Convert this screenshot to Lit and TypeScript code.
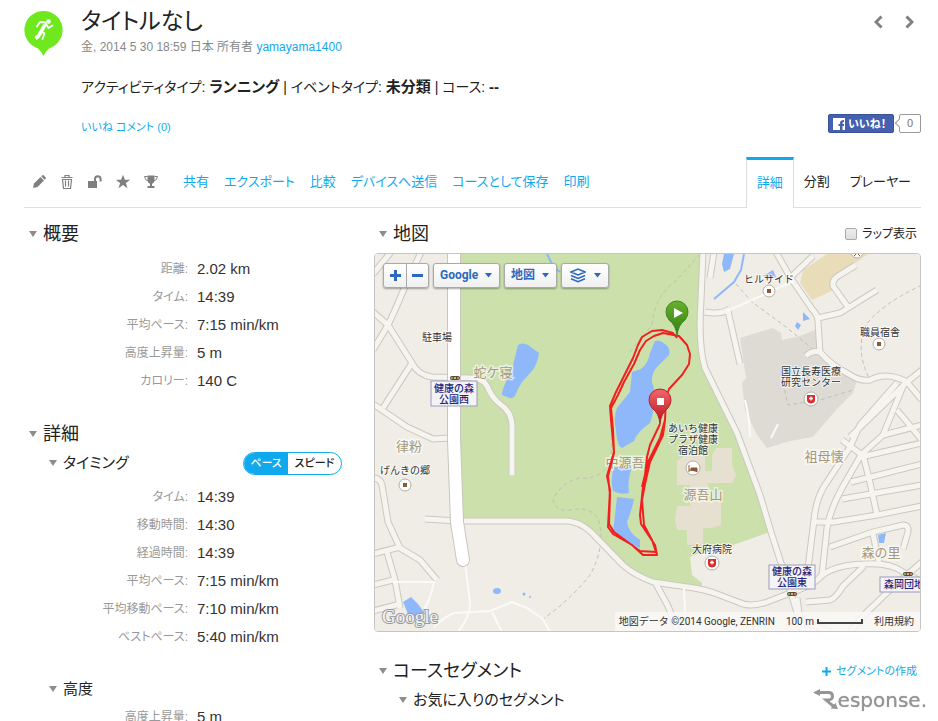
import { LitElement, html, css, svg } from "lit";
import { customElement, property } from "lit/decorators.js";

type Row = [string, string];

const summary: Row[] = [
  ["距離:", "2.02 km"],
  ["タイム:", "14:39"],
  ["平均ペース:", "7:15 min/km"],
  ["高度上昇量:", "5 m"],
  ["カロリー:", "140 C"],
];
const timing: Row[] = [
  ["タイム:", "14:39"],
  ["移動時間:", "14:30"],
  ["経過時間:", "14:39"],
  ["平均ペース:", "7:15 min/km"],
  ["平均移動ペース:", "7:10 min/km"],
  ["ベストペース:", "5:40 min/km"],
];
const elevation: Row[] = [["高度上昇量:", "5 m"]];

const base = css`
  *, *::before, *::after { box-sizing: border-box; }
  button, select, input { font: inherit; margin: 0; }
  button { cursor: pointer; }
  a { color: #11a9ed; text-decoration: none; }
  svg { display: block; }
`;

// Streets: drawn twice, first the grey casing and then the light surface.
const streets = [
  "M373 312L388 325L412 363Q418 375 432 377L470 378Q483 378 487 386Q492 398 500 404Q512 412 512 426V475",
  "M422 250L407 282L395 310L388 325L373 350",
  "M412 363L383 408",
  "M373 404L407 427L433 439L450 438",
  "M373 274L391 252",
  "M373 478Q380 478 382 485L388 522L400 548L420 560L437 580",
  "M373 554L400 547",
  "M387 552L395 580L400 608",
  "M373 585L393 580",
  "M373 611L400 604",
  "M425 519L457 521H568Q580 522 591 532L623 565Q634 575 653 582L687 587Q708 590 717 594L738 602Q750 608 767 602L793 592Q815 584 820 577Q834 565 863 564Q890 562 903 572L922 582",
  "M656 584L668 606L678 632",
  "M703 252L701 300Q698 345 705 368L737 433L760 495L771 532L782 566L792 596L803 632",
  "M705 312Q720 315 730 309",
  "M728 311L740 364",
  "M714 252L710 278",
  "M776 252L790 277L812 309Q818 315 818 322L820 352Q832 366 847 373Q860 382 870 380Q887 371 907 382L922 400",
  "M791 277L813 256",
  "M818 318L840 313L877 290",
  "M848 307L833 286Q832 280 838 276L856 265",
  "M922 370L907 382L850 437",
  "M897 383L860 425L850 447L827 482Q816 497 814 520L808 568L802 590",
  "M904 384L883 435L861 455L842 488Q830 510 827 528L822 575",
  "M842 440L866 458",
  "M863 455L869 478L877 515",
  "M861 457L922 443",
  "M851 482L922 464",
  "M842 499L922 485",
  "M814 522H834L877 515L922 506",
  "M830 547L873 532L903 525Q909 525 908 532L903 549",
  "M873 534L879 562",
  "M883 435L922 425",
  "M897 410L922 440",
  "M922 562L893 587L867 612L850 632",
  "M806 602L830 600Q836 598 843 586L864 566",
  "M797 598L800 620L830 632",
  "M806 356Q812 350 820 352",
];
const lanes = [
  "M393 582L434 582Q430 600 425 608L440 623",
  "M465 563L470 602Q471 615 458 632",
  "M434 627Q444 617 454 613L490 611L512 602L527 608L543 619L550 632",
  "M492 612L502 632",
  "M727 311L770 292L793 281",
  "M684 588L685 612",
  "M771 438L778 424",
  "M745 400Q750 420 750 437",
];

const place = (x: number, y: number, lines: string[], cls = "label") =>
  lines.map((t, i) => svg`<text class=${cls} x=${x} y=${y + i * 11}>${t}</text>`);
const spot = (x: number, y: number) => svg`
  <circle cx=${x} cy=${y} r="6" fill="#fff" stroke="#b3afa8"/>
  <rect x=${x - 2} y=${y - 2} width="4" height="4" fill="#8a5a33"/>`;
const hospital = (x: number, y: number) => svg`
  <circle cx=${x} cy=${y} r="7" fill="#fff" stroke="#b3afa8"/>
  <path d="M${x - 4} ${y - 4}h8v5q0 3-4 3.500q-4-.5-4-3.500z" fill="#dd2a2a"/>
  <path d="M${x - 2} ${y - 0.5}h4M${x} ${y - 2.500}v4" stroke="#fff" stroke-width="1.3"/>`;
const signal = (x: number, y: number) => svg`
  <rect x=${x - 5} y=${y - 2} width="10" height="4" rx="2" fill="#5b4a38"/>
  <circle cx=${x - 3} cy=${y} r="1" fill="#7fd07f"/>
  <circle cx=${x} cy=${y} r="1" fill="#ffe27a"/>
  <circle cx=${x + 3} cy=${y} r="1" fill="#ff8a7a"/>`;

@customElement("activity-map")
export class ActivityMap extends LitElement {
  static styles = [base, css`
    :host { display: block; position: relative; height: 379px; border: 1px solid #c5c5c5; border-radius: 4px; overflow: hidden; font-feature-settings: normal; }
    .canvas { width: 100%; height: 100%; }
    .casing path { fill: none; stroke: #cbc8c1; stroke-width: 7; }
    .surface path { fill: none; stroke: #f6f4ee; stroke-width: 5; }
    .lanes path { fill: none; stroke: #fbfaf7; stroke-width: 2; }
    .trail path { fill: none; stroke: #c3bfb5; stroke-dasharray: 4 3; }
    .water { fill: #8fb8fb; }
    .building { fill: #e6e0d1; }
    .label, .area, .station { font-family: "Noto Sans CJK JP", sans-serif; text-anchor: middle; }
    .label { font-size: 10px; fill: #333; stroke: #fff; stroke-width: 2; stroke-opacity: .7; paint-order: stroke; }
    .area { font-size: 13px; fill: #a3987a; stroke: #fff; stroke-width: 3; stroke-opacity: .6; paint-order: stroke; }
    .station { font-size: 10px; font-weight: 500; fill: #25257d; }
    .plate { fill: #f4f3f6; stroke: #9b9bbd; }
    .logo { font: 19px "Liberation Serif", serif; fill: #f5f5f5; stroke: #9a9a9a; stroke-width: 2; paint-order: stroke; }
    .controls { position: absolute; top: 9px; left: 8px; display: flex; gap: 4px; }
    .box { display: flex; align-items: center; height: 25px; border: 1px solid #a9a9a9; border-radius: 3px; background: linear-gradient(#fff, #f0f0f0); box-shadow: 0 1px 2px rgba(0, 0, 0, .35); color: #2c68bd; font: bold 12px/23px Roboto, "Noto Sans CJK JP", sans-serif; }
    .zoom { display: flex; align-items: center; justify-content: center; width: 22px; height: 23px; padding: 0; border: 0; background: none; }
    .zoom + .zoom { border-left: 1px solid #a9a9a9; }
    .pick { position: relative; }
    .pick select { appearance: none; height: 23px; padding: 0 20px 0 6px; border: 0; background: none; color: inherit; }
    .pick .caret { position: absolute; right: 7px; pointer-events: none; }
    .layers { gap: 8px; padding: 0 7px 0 8px; }
    .credits { position: absolute; right: 0; bottom: 0; display: flex; align-items: center; gap: 11px; height: 19px; padding: 0 6px 0 4px; background: rgba(250, 249, 247, .8); color: #333; font: 10px/19px Roboto, "Noto Sans CJK JP", sans-serif; white-space: nowrap; }
    .scale { display: flex; align-items: center; gap: 3px; }
    .bar { width: 46px; height: 5px; border: 2px solid #444; border-top: 0; }
    .credits a { color: #333; }
  `];

  render() {
    const caret = html`<svg class="caret" width="7" height="5" viewBox="0 0 7 5"><path d="M0 0h7L3.500 4.500z" fill="#2c68bd"/></svg>`;
    return html`
      <svg class="canvas" viewBox="375 254 545 377" preserveAspectRatio="xMidYMid slice" role="img" aria-label="地図">
        <defs>
          <linearGradient id="go" x2="0" y2="1"><stop stop-color="#69b02d"/><stop offset="1" stop-color="#2f7d12"/></linearGradient>
          <linearGradient id="stop" x2="0" y2="1"><stop stop-color="#f0696b"/><stop offset="1" stop-color="#b80f18"/></linearGradient>
        </defs>
        <rect x="375" y="254" width="545" height="377" fill="#f0ede6"/>
        <path d="M461 254H702L699 345L706 370L737 433L760 495L770 532L733 545L706 550L690 557L692 575L702 583V587L687 587L653 581L630 571L592 532L570 520H461z" fill="#cbe0ab"/>
        <path d="M740 338L756 333L773 328L781 333L782 340L800 336L815 330L818 355L835 368L857 380L853 393L836 410L813 437L790 441L767 448L757 435L745 410L742 383L746 378z" fill="#dedad4"/>
        <path d="M803 270L827 254H868L848 268L831 281L834 290L812 300L800 283z" fill="#e9dcb9"/>
        <path class="building" d="M677 461L685 455H705V471H712V455L716 448H732V464L736 475L732 483H708V500H712V502L721 500V525L712 528H703V545H687V530H677L675 520L677 506H690V485H677z"/>
        <g class="water">
          <path d="M518 345Q522 342 528 345L539 353Q537 365 532 371L522 382Q518 388 515 396Q512 400 507 397L502 395Q502 389 507 380Q512 375 513 365z"/>
          <path d="M655 341Q660 339 665 344Q671 348 669 355L658 366Q651 372 652 383Q655 388 655 402Q653 415 650 423Q637 432 634 441L622 448Q617 446 616 430Q613 418 617 408L630 392L632 372L641 369Q648 364 650 353z"/>
          <path d="M614 467H632Q627 480 629 493Q620 495 613 491Q610 480 614 467z"/>
          <path d="M617 497L634 499Q632 510 627 522Q628 532 640 540V548L626 542L613 533z"/>
          <path d="M724 254L722 264L724 272L730 269L734 254z"/>
          <path d="M763 276L773 270L776 277L768 279z"/>
          <path d="M803 312L810 319L803 321z"/>
          <path d="M797 322L801 325L798 330L795 326z"/>
          <path d="M878 535L886 533L884 543H879z"/>
          <path d="M403 602L411 597L418 604L424 612L420 618L408 614z"/>
          <ellipse cx="497" cy="591" rx="4" ry="3"/>
          <circle cx="524" cy="594" r="1.500"/><circle cx="530" cy="597" r="1"/>
        </g>
        <path d="M744 254L741 270L734 282L714 299M546 252L553 266L560 272" fill="none" stroke="#8fb8fb" stroke-width="2"/>
        <g class="trail">
          <path d="M700 254L675 282Q655 295 652 325L630 352"/>
          <path d="M612 436L611 462Q600 480 580 478Q560 483 553 500Q556 512 570 510Q595 505 600 525Q604 550 590 575Q570 600 543 619"/>
          <path d="M736 284L752 302L786 327L808 345L816 353"/>
          <path d="M922 285Q880 305 866 325Q855 350 869 378"/>
          <path d="M783 383L788 405L820 400L853 390"/>
        </g>
        <g class="casing">${streets.map((d) => svg`<path d=${d}/>`)}</g>
        <g class="surface">${streets.map((d) => svg`<path d=${d}/>`)}</g>
        <g class="lanes">${lanes.map((d) => svg`<path d=${d}/>`)}</g>
        <path d="M454 250V440L457 522L463 560" fill="none" stroke="#c9c6bf" stroke-width="14" stroke-linecap="round"/>
        <path d="M454 250V440L457 522L463 560" fill="none" stroke="#fff" stroke-width="12" stroke-linecap="round"/>
        ${spot(769, 291)}${spot(879, 344)}${spot(405, 485)}
        ${hospital(811, 399)}${hospital(712, 563)}
        <circle cx="693" cy="468" r="7" fill="#fff" stroke="#b3afa8"/>
        <path d="M689 465v7M689 470h8v2M691 468h6v2h-6z" fill="#8a5a33" stroke="#8a5a33"/>
        <circle cx="857" cy="252" r="6" fill="#fff" stroke="#b3afa8"/>
        <path d="M854 256l3-3 3 3" fill="none" stroke="#8a5a33"/>
        <rect class="plate" x="431" y="381" width="46" height="25"/>
        <rect class="plate" x="769" y="565" width="46" height="24"/>
        <rect class="plate" x="880" y="577" width="46" height="15"/>
        ${signal(455, 378)}${signal(792, 594)}${signal(908, 574)}
        ${place(454, 392, ["健康の森", "公園西"], "station")}
        ${place(792, 575, ["健康の森", "公園東"], "station")}
        ${place(904, 588, ["森岡団地"], "station")}
        ${place(437, 341, ["駐車場"])}
        ${place(769, 283, ["ヒルサイド"])}
        ${place(880, 336, ["職員宿舎"])}
        ${place(811, 375, ["国立長寿医療", "研究センター"])}
        ${place(693, 432, ["あいち健康", "プラザ健康", "宿泊館"])}
        ${place(405, 474, ["げんきの郷"])}
        ${place(712, 553, ["大府病院"])}
        ${place(493, 377, ["蛇ケ寝"], "area")}
        ${place(409, 451, ["律粉"], "area")}
        ${place(625, 467, ["中源吾"], "area")}
        ${place(703, 499, ["源吾山"], "area")}
        ${place(824, 461, ["祖母懐"], "area")}
        ${place(881, 557, ["森の里"], "area")}
        <g fill="none" stroke="#f31f1f" stroke-width="2" stroke-linejoin="round">
          <path d="M677 338L673 333L662 330L652 331L642 337L638 345L633 358L621 382L616 392L610 406L611 420L614 452L607 476L610 490L608 527L613 534L632 545L643 555L657 555L655 545L641 524L640 515L643 487L648 462L660 438L665 420L666 398L669 389L682 375L689 364L690 354L687 345L679 336L663 333L654 336L646 341L640 350L634 364L624 382L618 395L611 408L613 430L614 453L608 476L610 495L609 524L614 532L640 551L656 552L652 540L644 525L642 500L645 484L650 462L663 435L665 420M660 424L650 445L647 457L645 475L642 487"/>
        </g>
        <path d="M677 336Q676 325 669 320Q666 316 666 312A11 11 0 0 1 688 312Q688 316 685 320Q678 325 677 336z" fill="url(#go)" stroke="#3d8a1f"/>
        <path d="M674 308v10l9-5z" fill="#fff"/>
        <path d="M660 424Q659 413 652 408Q649 404 649 400A11 11 0 0 1 671 400Q671 404 668 408Q661 413 660 424z" fill="url(#stop)" stroke="#b4232a"/>
        <rect x="657" y="398" width="7" height="7" fill="#fff"/>
        <text class="logo" x="382" y="623">Google</text>
      </svg>
      <div class="controls">
        <div class="box">
          <button class="zoom" aria-label="拡大"><svg width="11" height="11" viewBox="0 0 11 11"><path d="M0 5.500h11M5.500 0v11" stroke="#2c68bd" stroke-width="3"/></svg></button>
          <button class="zoom" aria-label="縮小"><svg width="11" height="11" viewBox="0 0 11 11"><path d="M0 5.500h11" stroke="#2c68bd" stroke-width="3"/></svg></button>
        </div>
        <div class="box pick"><select aria-label="地図プロバイダ"><option>Google</option></select>${caret}</div>
        <div class="box pick"><select aria-label="地図タイプ"><option>地図</option></select>${caret}</div>
        <button class="box layers" aria-label="レイヤー">
          <svg width="16" height="15" viewBox="0 0 16 15" fill="none" stroke="#2c68bd" stroke-width="1.500"><path d="M1 4L8 1l7 3-7 3z"/><path d="M1 7.500l7 3 7-3M1 10.800l7 3 7-3"/></svg>
          ${caret}
        </button>
      </div>
      <div class="credits">
        <span>地図データ ©2014 Google, ZENRIN</span>
        <span class="scale">100 m <i class="bar"></i></span>
        <a href="#terms">利用規約</a>
      </div>`;
  }
}

@customElement("stat-list")
export class StatList extends LitElement {
  static properties = { rows: { attribute: false } };
  declare rows: Row[];
  static styles = css`
    :host { display: block; }
    dl { margin: 0; display: grid; grid-template-columns: 164px 1fr; column-gap: 9px; grid-auto-rows: 28px; align-items: center; }
    dt { text-align: right; color: #999; font-size: 12px; }
    dd { margin: 0; color: #333; font-size: 15px; }
  `;
  render() {
    return html`<dl>${this.rows.map(([k, v]) => html`<dt>${k}</dt><dd>${v}</dd>`)}</dl>`;
  }
}

@customElement("fold-heading")
export class FoldHeading extends LitElement {
  @property({ type: Boolean, reflect: true }) sub = false;
  static styles = css`
    :host { display: flex; align-items: center; gap: 6px; height: 30px; padding-left: 5px; color: #222; font-size: 18px; white-space: nowrap; }
    :host([sub]) { padding-left: 25px; height: 28px; font-size: 15px; }
    .tri { width: 8px; height: 6px; flex: none; background: #8d8d8d; clip-path: polygon(0 0, 100% 0, 50% 100%); }
  `;
  render() {
    return html`<span class="tri"></span><slot></slot>`;
  }
}

@customElement("app-root")
export class AppRoot extends LitElement {
  static styles = [base, css`
    :host { display: block; height: 100vh; overflow: auto; scrollbar-width: none; background: #fff; color: #222; font-family: "Liberation Sans", "Noto Sans CJK JP", sans-serif; font-feature-settings: "palt"; font-size: 14px; line-height: 20px; }
    h1, h2, h3, p { margin: 0; font-weight: 400; font-size: inherit; line-height: inherit; }
    .page { padding: 5px 17px 0 24px; }
    .head { display: grid; grid-template-columns: 39px 1fr auto; column-gap: 18px; }
    .badge { margin-top: 6px; }
    .title { font-size: 23px; line-height: 32px; }
    .meta { color: #888; font-size: 12px; }
    .about { margin-top: 20px; }
    .about b { font-size: 15px; }
    .social { margin-top: 20px; font-size: 11px; }
    .side { display: flex; flex-direction: column; justify-content: space-between; align-items: flex-end; }
    .pager { display: flex; gap: 22px; padding: 10px 7px 0 0; }
    .pager button { padding: 0; border: 0; background: none; }
    .like { display: flex; align-items: center; gap: 5px; margin-bottom: 4px; }
    .fb { display: flex; align-items: center; gap: 3px; height: 19px; width: 66px; padding: 0 4px; border: 1px solid #38519b; border-radius: 2px; background: #4460ae; color: #fff; font-weight: 700; font-size: 11px; white-space: nowrap; }
    .count { position: relative; width: 22px; height: 19px; border: 1px solid #999; border-radius: 2px; color: #777; font-size: 11px; line-height: 17px; text-align: center; }
    .count::before { content: ""; position: absolute; left: -4px; top: 5px; width: 6px; height: 6px; border: solid #999; border-width: 0 0 1px 1px; background: #fff; transform: rotate(45deg); }
    .toolbar { display: flex; align-items: stretch; justify-content: space-between; height: 51px; margin-top: 20px; border-bottom: 1px solid #dedede; font-size: 13px; }
    .tools, .links, .tabs { display: flex; align-items: center; white-space: nowrap; }
    .tools { gap: 12px; padding-left: 7px; }
    .tools button { padding: 0; border: 0; background: none; }
    .links { flex: 1; gap: 15px; padding-left: 24px; }
    .tab { display: flex; align-items: center; height: 51px; padding: 0 10px; color: #222; }
    .tab.on { padding-bottom: 2px; border: 1px solid #dedede; border-top: 3px solid #11a9ed; border-bottom: 0; background: #fff; color: #11a9ed; }
    .body { display: grid; grid-template-columns: 318px minmax(0, 1fr); column-gap: 32px; padding-top: 11px; }
    .split { display: flex; align-items: center; justify-content: space-between; }
    .overview { padding: 6px 0 24px; }
    .times { padding: 6px 0 24px; }
    .toggle { display: flex; overflow: hidden; height: 23px; border: 1px solid #11a9ed; border-radius: 12px; font-size: 11px; line-height: 21px; font-weight: 500; }
    .toggle label { display: flex; justify-content: center; width: 53px; }
    .toggle label:first-child { width: 44px; }
    .toggle label:has(:checked) { background: #11a9ed; color: #fff; }
    .toggle input { position: absolute; opacity: 0; width: 1px; height: 1px; }
    .check { display: flex; align-items: center; gap: 5px; padding-right: 4px; font-size: 12px; }
    .check input { appearance: none; width: 12px; height: 12px; border: 1px solid #aaa; border-radius: 2px; background: linear-gradient(#eee, #ddd); }
    .map { margin-top: 4px; }
    .segments { margin-top: 24px; }
    .add { padding-right: 4px; font-size: 11px; display: flex; align-items: center; gap: 5px; }
    .mark { position: fixed; right: 11px; bottom: 9px; display: flex; align-items: flex-end; color: #959595; font: 20px/24px "DejaVu Sans", sans-serif; pointer-events: none; text-shadow: 0 0 1px #959595; }
  `];

  render() {
    return html`
      <div class="page">
        <header class="head">
          <svg class="badge" width="39" height="45" viewBox="0 0 39 45">
            <path d="M19.500 0A19 19 0 0 0 12 36.500Q16 38 19.500 45Q23 38 27 36.500A19 19 0 0 0 19.500 0z" fill="#70e81e"/>
            <circle cx="24.500" cy="10.500" r="2.300" fill="#fff"/>
            <path d="M21.500 11.500L16 11L13 15.500M22 13L24.500 17L28.500 14.500M17 20L20.500 22.500L18.500 28" fill="none" stroke="#fff" stroke-width="1.800" stroke-linecap="round" stroke-linejoin="round"/>
            <path d="M21 13.500L17.500 20L14.500 25L11.500 27.500" fill="none" stroke="#fff" stroke-width="3.600" stroke-linejoin="round"/>
          </svg>
          <div>
            <h1 class="title">タイトルなし</h1>
            <p class="meta">金, 2014 5 30 18:59 日本 所有者 <a href="#user">yamayama1400</a></p>
            <p class="about">アクティビティタイプ: <b>ランニング</b> | イベントタイプ: <b>未分類</b> | コース: <b>--</b></p>
            <p class="social"><a href="#like">いいね</a> <a href="#comments">コメント (0)</a></p>
          </div>
          <div class="side">
            <nav class="pager">
              <button aria-label="前へ"><svg width="9" height="14" viewBox="0 0 9 14"><path d="M7.500 1.500L2 7l5.500 5.500" fill="none" stroke="#808080" stroke-width="3"/></svg></button>
              <button aria-label="次へ"><svg width="9" height="14" viewBox="0 0 9 14"><path d="M1.500 1.500L7 7l-5.500 5.500" fill="none" stroke="#808080" stroke-width="3"/></svg></button>
            </nav>
            <div class="like">
              <button class="fb"><svg width="12" height="12" viewBox="0 0 12 12"><path d="M0 0h12v12H9.500V8h1.500V6H9.500V5Q9.500 4 11 4V2Q7 2 7 5v1H5.500v2H7v4H0z" fill="#fff"/></svg>いいね！</button>
              <span class="count">0</span>
            </div>
          </div>
        </header>

        <div class="toolbar">
          <div class="tools">
            <button aria-label="編集"><svg width="16" height="16" viewBox="0 0 16 16" fill="#7f7f7f"><path d="M2 14l1-4.500L9.500 3l3.500 3.500L6.500 13z"/><path d="M10.200 2.300L12 .8 15.200 4l-1.500 1.800z"/></svg></button>
            <button aria-label="削除"><svg width="16" height="16" viewBox="0 0 16 16" fill="none" stroke="#7f7f7f" stroke-width="1.200"><path d="M2.500 3.500h11M6 3V1.500h4V3M3.500 5.500l1 9h7l1-9z"/><path d="M6.500 6.500v6M9.500 6.500v6"/></svg></button>
            <button aria-label="公開設定"><svg width="16" height="16" viewBox="0 0 16 16"><path d="M1 7h9v7H1z" fill="#7f7f7f"/><path d="M8 7V5q0-2.800 2.800-2.800T13.600 5v2.500" fill="none" stroke="#7f7f7f" stroke-width="2"/></svg></button>
            <button aria-label="お気に入り"><svg width="16" height="16" viewBox="0 0 16 16"><path d="M8 .8l1.900 5h5.300l-4.300 3.200 1.600 5.200L8 11l-4.500 3.200 1.600-5.200L.8 5.800h5.300z" fill="#7f7f7f"/></svg></button>
            <button aria-label="記録"><svg width="16" height="16" viewBox="0 0 16 16"><path d="M4.500 1.500h7v4Q11.500 9 9 9.800V12h2.500v2h-7v-2H7V9.800Q4.500 9 4.500 5.500z" fill="#7f7f7f"/><path d="M4.500 2.500h-3Q2 6.500 5.500 7M11.500 2.500h3Q14 6.500 10.500 7" fill="none" stroke="#7f7f7f"/></svg></button>
          </div>
          <div class="links">
            <a href="#share">共有</a><a href="#export">エクスポート</a><a href="#compare">比較</a><a href="#send">デバイスへ送信</a><a href="#course">コースとして保存</a><a href="#print">印刷</a>
          </div>
          <nav class="tabs">
            <a class="tab on" href="#detail" aria-current="page">詳細</a><a class="tab" href="#splits">分割</a><a class="tab" href="#player">プレーヤー</a>
          </nav>
        </div>

        <main class="body">
          <section>
            <h2><fold-heading>概要</fold-heading></h2>
            <stat-list class="overview" .rows=${summary}></stat-list>
            <h2><fold-heading>詳細</fold-heading></h2>
            <div class="split">
              <h3><fold-heading sub>タイミング</fold-heading></h3>
              <div class="toggle" role="radiogroup">
                <label><input type="radio" name="unit" checked>ペース</label>
                <label><input type="radio" name="unit">スピード</label>
              </div>
            </div>
            <stat-list class="times" .rows=${timing}></stat-list>
            <h3><fold-heading sub>高度</fold-heading></h3>
            <stat-list .rows=${elevation}></stat-list>
          </section>
          <section>
            <div class="split">
              <h2><fold-heading>地図</fold-heading></h2>
              <label class="check"><input type="checkbox">ラップ表示</label>
            </div>
            <activity-map class="map"></activity-map>
            <div class="split segments">
              <h2><fold-heading>コースセグメント</fold-heading></h2>
              <a class="add" href="#new-segment"><svg width="9" height="9" viewBox="0 0 9 9"><path d="M0 4.500h9M4.500 0v9" stroke="#11a9ed" stroke-width="2"/></svg>セグメントの作成</a>
            </div>
            <h3><fold-heading sub>お気に入りのセグメント</fold-heading></h3>
          </section>
        </main>
      </div>
      <div class="mark">
        <svg width="25" height="24" viewBox="0 0 25 24"><path d="M0 4.500L7 1V3h8.500q5.500 0 5.500 5.200 0 3.800-4.500 5L21 16.500l1.500-1.500 2.500 6-7.500-.5 1.500-1.500-10-8.500h6q3 0 3-2.300T15.500 6H7v2z" fill="#959595"/></svg>esponse.
      </div>`;
  }
}
